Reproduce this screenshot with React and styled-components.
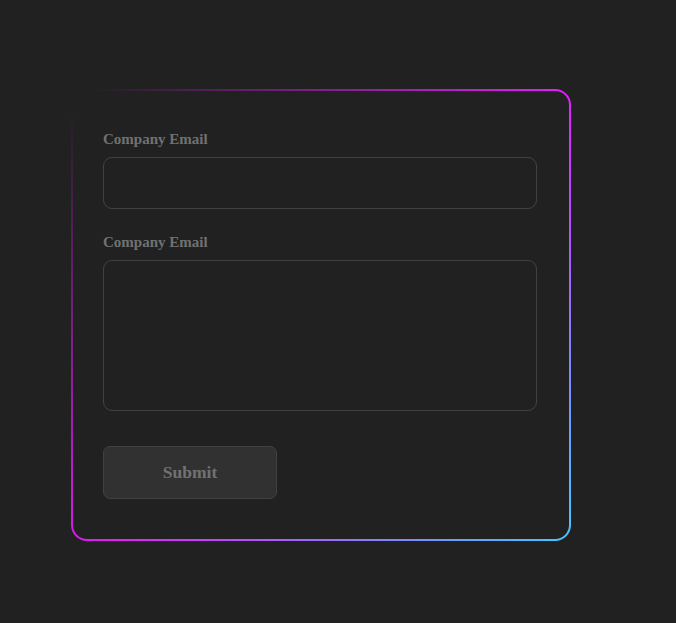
import styled, { createGlobalStyle } from "styled-components";

const GlobalStyle = createGlobalStyle`
  html, body {
    margin: 0;
    padding: 0;
    background: #212121;
    font-family: "Liberation Serif", "Times New Roman", serif;
  }
  * {
    box-sizing: border-box;
  }
`;

export default function App() {
    return (
        <>
            <GlobalStyle />
            <Page>
                <FormCard onSubmit={(e) => e.preventDefault()}>
                    <FormGroup>
                        <Label htmlFor="email">Company Email</Label>
                        <Input id="email" type="text" />
                    </FormGroup>
                    <FormGroup>
                        <Label htmlFor="message">Company Email</Label>
                        <TextArea id="message" />
                    </FormGroup>
                    <SubmitButton type="submit">Submit</SubmitButton>
                </FormCard>
            </Page>
        </>
    );
}

const Page = styled.div`
width: 676px;
height: 623px;
padding: 89px 0 0 71px;
background: #212121;
`;

const FormCard = styled.form`
width: 500px;
height: 452px;
display: flex;
flex-direction: column;
gap: 25px;
padding: 40px 32px 39px 30px;
border: 2px solid transparent;
border-radius: 16px;
background: linear-gradient(#212121, #212121) padding-box,
            linear-gradient(135deg, transparent 2%, #e81cff 52%, #40c9ff 100%) border-box;
`;

const FormGroup = styled.div`
display: flex;
flex-direction: column;
`;

const Label = styled.label`
display: block;
margin-bottom: 9px;
color: #717171;
font-weight: 700;
font-size: 15px;
`;

const Input = styled.input`
width: 100%;
height: 52px;
padding: 12px 16px;
border-radius: 9px;
color: #fff;
font-family: inherit;
background-color: transparent;
border: 1px solid #414141;
outline: none;
`;

const TextArea = styled.textarea`
width: 100%;
height: 151px;
padding: 12px 16px;
border-radius: 9px;
resize: none;
color: #fff;
font-family: inherit;
background-color: transparent;
border: 1px solid #414141;
outline: none;
`;

const SubmitButton = styled.button`
align-self: flex-start;
flex-shrink: 0;
width: 174px;
height: 53px;
margin-top: 10px;
display: flex;
align-items: center;
justify-content: center;
font-family: inherit;
font-size: 17.5px;
font-weight: 700;
color: #717171;
background: #313131;
border: 1px solid #414141;
border-radius: 7px;
cursor: pointer;
`;
